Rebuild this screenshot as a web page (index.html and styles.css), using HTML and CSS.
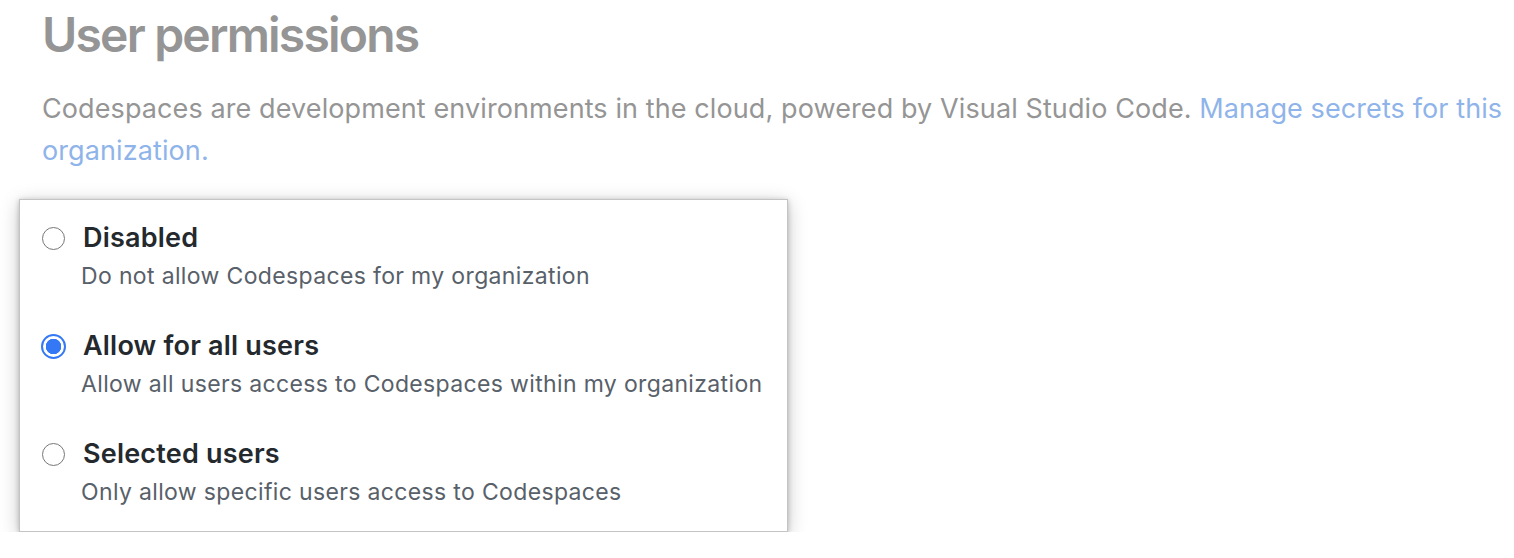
FILE: index.html
```html
<!DOCTYPE html>
<html>
<head>
<meta charset="utf-8">
<link rel="stylesheet" href="styles.css">
</head>
<body>
<div class="page">
  <h1 class="title">User permissions</h1>
  <p class="lead">Codespaces are development environments in the cloud, powered by Visual Studio Code. <a class="link" href="#">Manage secrets for this organization.</a></p>
  <div class="card">
    <label class="option">
      <span class="radio"></span>
      <span class="text">
        <span class="opt-title">Disabled</span>
        <span class="opt-desc">Do not allow Codespaces for my organization</span>
      </span>
    </label>
    <label class="option">
      <span class="radio checked"></span>
      <span class="text">
        <span class="opt-title">Allow for all users</span>
        <span class="opt-desc">Allow all users access to Codespaces within my organization</span>
      </span>
    </label>
    <label class="option">
      <span class="radio"></span>
      <span class="text">
        <span class="opt-title">Selected users</span>
        <span class="opt-desc">Only allow specific users access to Codespaces</span>
      </span>
    </label>
  </div>
</div>
</body>
</html>
```
FILE: styles.css
```css
html, body {
  margin: 0;
  padding: 0;
  background: #fff;
}
body {
  font-family: Inter, "Noto Sans", "Liberation Sans", sans-serif;
  overflow: hidden;
}
.page {
  padding: 0 0 0 42px;
}
.title {
  margin: 0;
  padding-top: 7px;
  font-size: 48px;
  font-weight: 600;
  line-height: 56px;
  color: #959595;
  letter-spacing: -1.8px;
}
.lead {
  margin: 25px 0 0 0;
  font-size: 27px;
  line-height: 42px;
  color: #959595;
  letter-spacing: 0.1px;
  max-width: 1470px;
}
.link {
  color: #8fb4ea;
  text-decoration: none;
}
.card {
  margin: 27px 0 0 -23px;
  width: 769px;
  border: 1px solid #c4c4c4;
  background: #fff;
  box-shadow: 0 1px 5px rgba(0, 0, 0, 0.22), 0 4px 18px rgba(0, 0, 0, 0.22);
  padding: 21px 0 23px 22px;
  box-sizing: border-box;
}
.option {
  display: flex;
  align-items: flex-start;
}
.option + .option {
  margin-top: 37px;
}
.radio {
  flex: none;
  width: 23px;
  height: 23px;
  margin: 5.5px 18px 0 0;
  border: 1.5px solid #777;
  border-radius: 50%;
  box-sizing: border-box;
  background: #fff;
}
.radio.checked {
  width: 25px;
  height: 25px;
  margin: 4.5px 17px 0 -1px;
  border: 2.5px solid #3478f6;
  background: radial-gradient(circle, #3478f6 0 7.5px, #fff 8px);
}
.text {
  display: flex;
  flex-direction: column;
}
.opt-title {
  font-size: 27px;
  font-weight: 600;
  line-height: 34px;
  color: #24292e;
  letter-spacing: 0.2px;
}
.opt-desc {
  margin-top: 5px;
  margin-left: -2px;
  font-size: 23px;
  line-height: 32px;
  color: #586069;
  letter-spacing: 0.35px;
}
```
